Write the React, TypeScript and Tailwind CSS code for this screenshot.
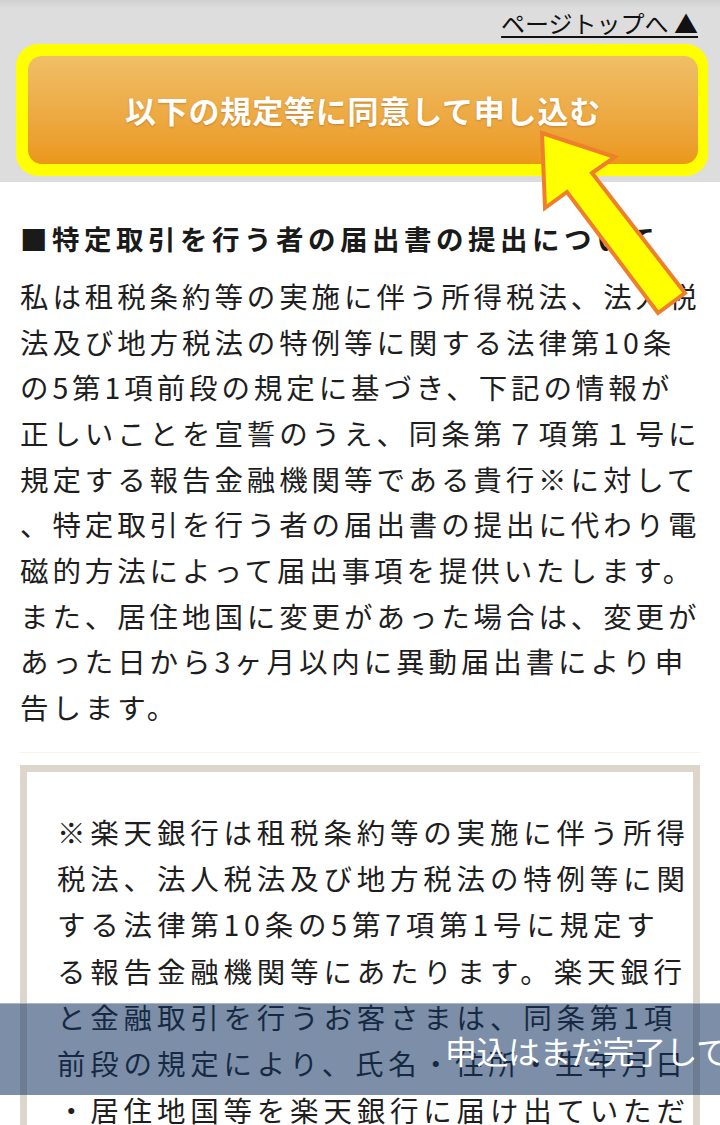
export default function App() {
  const body = [
    "私は租税条約等の実施に伴う所得税法、法人税",
    "法及び地方税法の特例等に関する法律第10条",
    "の5第1項前段の規定に基づき、下記の情報が",
    "正しいことを宣誓のうえ、同条第７項第１号に",
    "規定する報告金融機関等である貴行※に対して",
    "、特定取引を行う者の届出書の提出に代わり電",
    "磁的方法によって届出事項を提供いたします。",
    "また、居住地国に変更があった場合は、変更が",
    "あった日から3ヶ月以内に異動届出書により申",
    "告します。",
  ];
  const note = [
    "※楽天銀行は租税条約等の実施に伴う所得",
    "税法、法人税法及び地方税法の特例等に関",
    "する法律第10条の5第7項第1号に規定す",
    "る報告金融機関等にあたります。楽天銀行",
    "と金融取引を行うお客さまは、同条第1項",
    "前段の規定により、氏名・住所・生年月日",
    "・居住地国等を楽天銀行に届け出ていただ",
    "く必要があります。",
  ];
  return (
    <div className="relative w-[720px] min-h-[1125px] overflow-hidden bg-white text-[#1e1e1e] font-['Noto_Sans_CJK_JP','Noto_Sans',sans-serif]">
      <section className="bg-[linear-gradient(#d0d0d0,#dddddd_8px)] pt-[6px] pb-[6px] pl-[16px] pr-[12px]">
        <div className="flex justify-end pr-[10px]">
          <a className="text-[24px] leading-[34px] underline underline-offset-[3px] text-[#111] whitespace-nowrap">
            ページトップへ ▲
          </a>
        </div>
        <div className="mt-[4px] rounded-[22px] bg-[#ffff00] pt-[12px] pb-[12px] pl-[12px] pr-[10px]">
          <div className="h-[108px] rounded-[14px] bg-gradient-to-b from-[#efbf66] to-[#eb9818] flex items-center justify-center">
            <span className="text-white font-bold text-[31px] tracking-[0.8px] [text-shadow:0_1px_2px_rgba(120,60,0,0.35)] whitespace-nowrap">
              以下の規定等に同意して申し込む
            </span>
          </div>
        </div>
      </section>

      <section className="px-[20px] pt-[33px] pb-[40px]">
        <h2 className="font-bold text-[27.5px] leading-[46px] tracking-[4.5px] whitespace-nowrap text-[#1a1a1a]">
          ■特定取引を行う者の届出書の提出について
        </h2>
        <div className="mt-[12px] text-[28.5px] leading-[45.67px] tracking-[3.9px]">
          {body.map((l, i) => (
            <div key={i} className="whitespace-nowrap">{l}</div>
          ))}
        </div>
        <div className="mt-[22px] h-px bg-[#f6f3ec]" />
        <div className="mt-[12px] border-[7px] border-[#dcd6cb] pt-[37px] pl-[30px] pb-[30px]">
          <div className="text-[28.5px] leading-[46.3px] tracking-[4.8px]">
            {note.map((l, i) => (
              <div key={i} className="whitespace-nowrap">{l}</div>
            ))}
          </div>
        </div>
      </section>

      <svg
        className="absolute top-0 left-0 pointer-events-none"
        width="720"
        height="340"
        viewBox="0 0 720 340"
      >
        <polygon
          points="542,133 615,157 592,173 685,293 658,313 567,192 545,208"
          fill="#ffff00"
          stroke="#ee7f2d"
          strokeWidth="4"
          strokeLinejoin="miter"
        />
      </svg>

      <div className="absolute left-0 top-[1003px] w-[720px] h-[92px] bg-[rgba(18,51,96,0.55)] border-t border-[rgba(255,255,255,0.35)] overflow-hidden flex items-center">
        <span className="pl-[445px] text-white text-[32px] tracking-[-0.5px] whitespace-nowrap leading-none">
          申込はまだ完了していません
        </span>
      </div>
    </div>
  );
}
